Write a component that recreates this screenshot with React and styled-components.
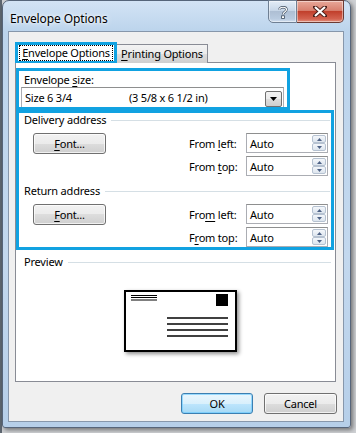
import React from 'react';
import styled, { createGlobalStyle } from 'styled-components';

const HIGHLIGHT = '#11a2e1';
const UI_FONT = '"Segoe UI", "Noto Sans", "DejaVu Sans", sans-serif';

const GlobalStyle = createGlobalStyle`
  html, body {
    margin: 0;
    padding: 0;
  }
  body {
    width: 356px;
    height: 433px;
    overflow: hidden;
    background: #d9dadc;
    font-family: ${UI_FONT};
    font-size: 11px;
    letter-spacing: -0.2px;
    color: #000;
    white-space: nowrap;
  }
`;

// Fenêtre Aero complète
const Screen = styled.div`
  width: 356px;
  height: 433px;
  box-sizing: border-box;
  padding: 0 5px 5px 2px;
  background: linear-gradient(to right, #5d6670 0 2px, #cfd1d4 2px);
`;

const Window = styled.div`
  height: 428px;
  box-sizing: border-box;
  display: flex;
  flex-direction: column;
  border: 1px solid #56657a;
  border-radius: 7px 7px 3px 3px;
  background: linear-gradient(#d3e3f5, #bcd4ec 30px, #c3d8ee 60%, #b6cfe9);
  box-shadow: 2px 2px 4px rgba(0, 0, 0, 0.45);
`;

const TitleBar = styled.div`
  height: 30px;
  flex: none;
  display: flex;
  align-items: flex-start;
  justify-content: space-between;
  padding: 0 6px 0 7px;
`;

const Title = styled.div`
  font-size: 12px;
  letter-spacing: -0.1px;
  line-height: 16px;
  margin-top: 10px;
  text-shadow: 0 0 6px #fff, 0 0 3px #fff;
`;

const CaptionButtons = styled.div`
  display: flex;
  margin-top: -1px;
`;

const CaptionButton = styled.div`
  height: 23px;
  width: ${p => (p.close ? '47px' : '29px')};
  box-sizing: border-box;
  display: flex;
  align-items: center;
  justify-content: center;
  border: 1px solid ${p => (p.close ? '#6c3a32' : '#6f7f93')};
  border-left-width: ${p => (p.close ? '0' : '1px')};
  border-radius: ${p => (p.close ? '0 0 5px 0' : '0 0 0 5px')};
  background: ${p =>
    p.close
      ? 'linear-gradient(#e8a899, #d8806f 45%, #c1402c 50%, #d3624f 85%, #e3917e)'
      : 'linear-gradient(#e4edf7, #c8d7e8 45%, #aebfd4 50%, #b9cbe0 85%, #d0deee)'};
  box-shadow: inset 0 0 0 1px rgba(255, 255, 255, 0.45);
`;

const Body = styled.div`
  flex: 1;
  display: flex;
  padding: 0 6px 5px 5px;
`;

const Client = styled.div`
  flex: 1;
  display: flex;
  flex-direction: column;
  background: #f0f0f0;
  border: 1px solid #8797ab;
  padding: 10px 7px 0 6px;
`;

const Tabs = styled.div`
  display: flex;
  align-items: flex-end;
  height: 21px;
  position: relative;
  z-index: 1;
`;

const ActiveTab = styled.div`
  width: 102px;
  height: 21px;
  box-sizing: border-box;
  border: 3px solid ${HIGHLIGHT};
  border-bottom-width: 2px;
  background: #fff;
  display: flex;
  align-items: center;
  justify-content: center;
`;

const FocusText = styled.span`
  outline: 1px dotted #000;
  outline-offset: 0;
  padding: 0 2px;
  line-height: 14px;
`;

const Tab = styled.div`
  width: 91px;
  height: 19px;
  box-sizing: border-box;
  border: 1px solid #898c95;
  border-left: none;
  border-bottom: none;
  background: linear-gradient(#f3f3f3, #ebebeb 50%, #dddddd 50%, #cfcfcf);
  display: flex;
  align-items: center;
  justify-content: center;
  line-height: 14px;
`;

const Panel = styled.div`
  height: 320px;
  box-sizing: border-box;
  margin-top: -1px;
  border: 1px solid #898c95;
  background: #fff;
  display: flex;
  flex-direction: column;
  padding-top: 5px;
`;

const HighlightBox = styled.div`
  box-sizing: border-box;
  width: ${p => p.w}px;
  height: ${p => p.h}px;
  border: 3px solid ${HIGHLIGHT};
  display: flex;
  flex-direction: column;
  overflow: hidden;
`;

const FieldLabel = styled.div`
  line-height: 15px;
  padding: 1px 0 0 5px;
`;

const Combo = styled.div`
  margin-left: 2px;
  width: 263px;
  height: 22px;
  flex: none;
  box-sizing: border-box;
  border: 1px solid #abadb3;
  border-top-color: #8e8f8f;
  display: flex;
  align-items: flex-start;
  padding: 3px 1px 0 3px;
`;

const ComboText = styled.span`
  width: 104px;
  line-height: 14px;
`;

const DropButton = styled.div`
  margin-left: auto;
  width: 17px;
  height: 16px;
  box-sizing: border-box;
  border: 1px solid #707070;
  border-radius: 2px;
  background: linear-gradient(#f2f2f2, #ebebeb 50%, #dddddd 50%, #cfcfcf);
  display: flex;
  align-items: center;
  justify-content: center;
`;

const GroupHeader = styled.div`
  display: flex;
  align-items: center;
  height: 14px;
  margin-top: ${p => p.top || 0}px;
  padding: 0 ${p => p.right || 1}px 0 ${p => p.left || 5}px;
  gap: 5px;
  line-height: 14px;

  &::after {
    content: '';
    flex: 1;
    height: 1px;
    background: #d5dfe5;
  }
`;

const AddressRow = styled.div`
  display: flex;
  align-items: flex-start;
  margin-top: 6px;
  padding: 0 3px 0 14px;
`;

const PushButton = styled.div`
  width: ${p => p.w || 73}px;
  height: 21px;
  box-sizing: border-box;
  border: 1px solid ${p => (p.primary ? '#3c7fb1' : '#707070')};
  border-radius: 3px;
  background: ${p =>
    p.primary
      ? 'linear-gradient(#eaf6fd, #d9f0fc 50%, #bee6fd 50%, #a7d9f5)'
      : 'linear-gradient(#f2f2f2, #ebebeb 50%, #dddddd 50%, #cfcfcf)'};
  box-shadow: inset 0 0 0 1px ${p => (p.primary ? 'rgba(100, 200, 255, 0.6)' : 'rgba(255, 255, 255, 0.7)')};
  display: flex;
  align-items: center;
  justify-content: center;
  line-height: 14px;
`;

const Fields = styled.div`
  margin-left: auto;
  display: grid;
  grid-template-columns: 57px 82px;
  row-gap: 3px;
  align-items: center;
`;

const SpinBox = styled.div`
  height: 20px;
  box-sizing: border-box;
  border: 1px solid #abadb3;
  border-top-color: #8e8f8f;
  display: flex;
  align-items: center;
  padding: 0 1px 0 3px;
`;

const SpinButtons = styled.div`
  margin-left: auto;
  width: 14px;
  height: 16px;
  display: flex;
  flex-direction: column;
`;

const SpinHalf = styled.div`
  flex: 1;
  box-sizing: border-box;
  border: 1px solid #b6c2d1;
  border-radius: 2px;
  background: linear-gradient(#f4f7fb, #dde5ee);
  display: flex;
  align-items: center;
  justify-content: center;
`;

const Key = styled.u`
  text-decoration-thickness: 1px;
  text-underline-offset: 2px;
`;

const Envelope = styled.div`
  margin: 21px 0 0 108px;
  width: 113px;
  height: 62px;
  box-sizing: border-box;
  border: 2px solid #000;
  background: #fff;
  box-shadow: 2px 2px 4px rgba(0, 0, 0, 0.45);
`;

const ButtonRow = styled.div`
  display: flex;
  justify-content: flex-end;
  gap: 11px;
  margin: 11px -1px 0 0;
`;

const Triangle = ({ up, size = 3 }) => (
  <svg width={size * 2 + 1} height={size + 1} viewBox={`0 0 ${size * 2 + 1} ${size + 1}`}>
    <polygon
      points={up ? `0,${size + 1} ${size * 2 + 1},${size + 1} ${size + 0.5},0` : `0,0 ${size * 2 + 1},0 ${size + 0.5},${size + 1}`}
      fill={size > 2 && !up ? '#000' : '#4d6185'}
    />
  </svg>
);

const Spin = () => (
  <SpinBox>
    Auto
    <SpinButtons>
      <SpinHalf><Triangle up size={2} /></SpinHalf>
      <SpinHalf><Triangle size={2} /></SpinHalf>
    </SpinButtons>
  </SpinBox>
);

const AddressBlock = ({ title, top, leftKey, topKey }) => (
  <>
    <GroupHeader top={top}>{title}</GroupHeader>
    <AddressRow>
      <PushButton>
        <span><Key>F</Key>ont...</span>
      </PushButton>
      <Fields>
        <span>{leftKey}</span>
        <Spin />
        <span>{topKey}</span>
        <Spin />
      </Fields>
    </AddressRow>
  </>
);

export default function App() {
  return (
    <>
      <GlobalStyle />
      <Screen>
        <Window>
          <TitleBar>
            <Title>Envelope Options</Title>
            <CaptionButtons>
              <CaptionButton>
                <svg width="12" height="14" viewBox="0 0 12 14">
                  <path
                    d="M2.5 4.5 C2.5 1.5 9.5 1.5 9.5 4.5 C9.5 7 6 7 6 9.5"
                    fill="none"
                    stroke="#3b4a5c"
                    strokeWidth="2.4"
                  />
                  <path
                    d="M2.5 4.5 C2.5 1.5 9.5 1.5 9.5 4.5 C9.5 7 6 7 6 9.5"
                    fill="none"
                    stroke="#fff"
                    strokeWidth="1.2"
                  />
                  <rect x="4.6" y="10.8" width="2.8" height="2.6" fill="#fff" stroke="#3b4a5c" strokeWidth="0.8" />
                </svg>
              </CaptionButton>
              <CaptionButton close>
                <svg width="14" height="11" viewBox="0 0 14 11">
                  <path d="M2 1 L12 10 M12 1 L2 10" stroke="#4a1f19" strokeWidth="4" strokeLinecap="square" />
                  <path d="M2 1 L12 10 M12 1 L2 10" stroke="#fff" strokeWidth="2.2" />
                </svg>
              </CaptionButton>
            </CaptionButtons>
          </TitleBar>
          <Body>
            <Client>
              <Tabs>
                <ActiveTab>
                  <FocusText><Key>E</Key>nvelope Options</FocusText>
                </ActiveTab>
                <Tab>
                  <span><Key>P</Key>rinting Options</span>
                </Tab>
              </Tabs>
              <Panel>
                <HighlightBox w={274} h={42}>
                  <FieldLabel>Envelope <Key>s</Key>ize:</FieldLabel>
                  <Combo>
                    <ComboText>Size 6 3/4</ComboText>
                    <ComboText>(3 5/8 x 6 1/2 in)</ComboText>
                    <DropButton><Triangle size={3} /></DropButton>
                  </Combo>
                </HighlightBox>
                <HighlightBox w={318} h={140}>
                  <AddressBlock
                    title="Delivery address"
                    leftKey={<span>From <Key>l</Key>eft:</span>}
                    topKey={<span>From <Key>t</Key>op:</span>}
                  />
                  <AddressBlock
                    title="Return address"
                    top={8}
                    leftKey={<span>Fro<Key>m</Key> left:</span>}
                    topKey={<span>F<Key>r</Key>om top:</span>}
                  />
                </HighlightBox>
                <GroupHeader top={5} left={8} right={4}>Preview</GroupHeader>
                <Envelope>
                  <svg width="109" height="58" viewBox="0 0 109 58">
                    <rect x="90" y="2" width="12" height="12" fill="#000" />
                    <g stroke="#000" strokeWidth="1">
                      <line x1="5" y1="3.5" x2="31" y2="3.5" />
                      <line x1="5" y1="5.5" x2="31" y2="5.5" />
                      <line x1="5" y1="8" x2="31" y2="8" />
                    </g>
                    <g stroke="#000" strokeWidth="1.6">
                      <line x1="41" y1="26" x2="102" y2="26" />
                      <line x1="41" y1="32" x2="102" y2="32" />
                      <line x1="41" y1="38" x2="102" y2="38" />
                      <line x1="41" y1="44" x2="102" y2="44" />
                    </g>
                  </svg>
                </Envelope>
              </Panel>
              <ButtonRow>
                <PushButton primary w={72}>OK</PushButton>
                <PushButton>Cancel</PushButton>
              </ButtonRow>
            </Client>
          </Body>
        </Window>
      </Screen>
    </>
  );
}
